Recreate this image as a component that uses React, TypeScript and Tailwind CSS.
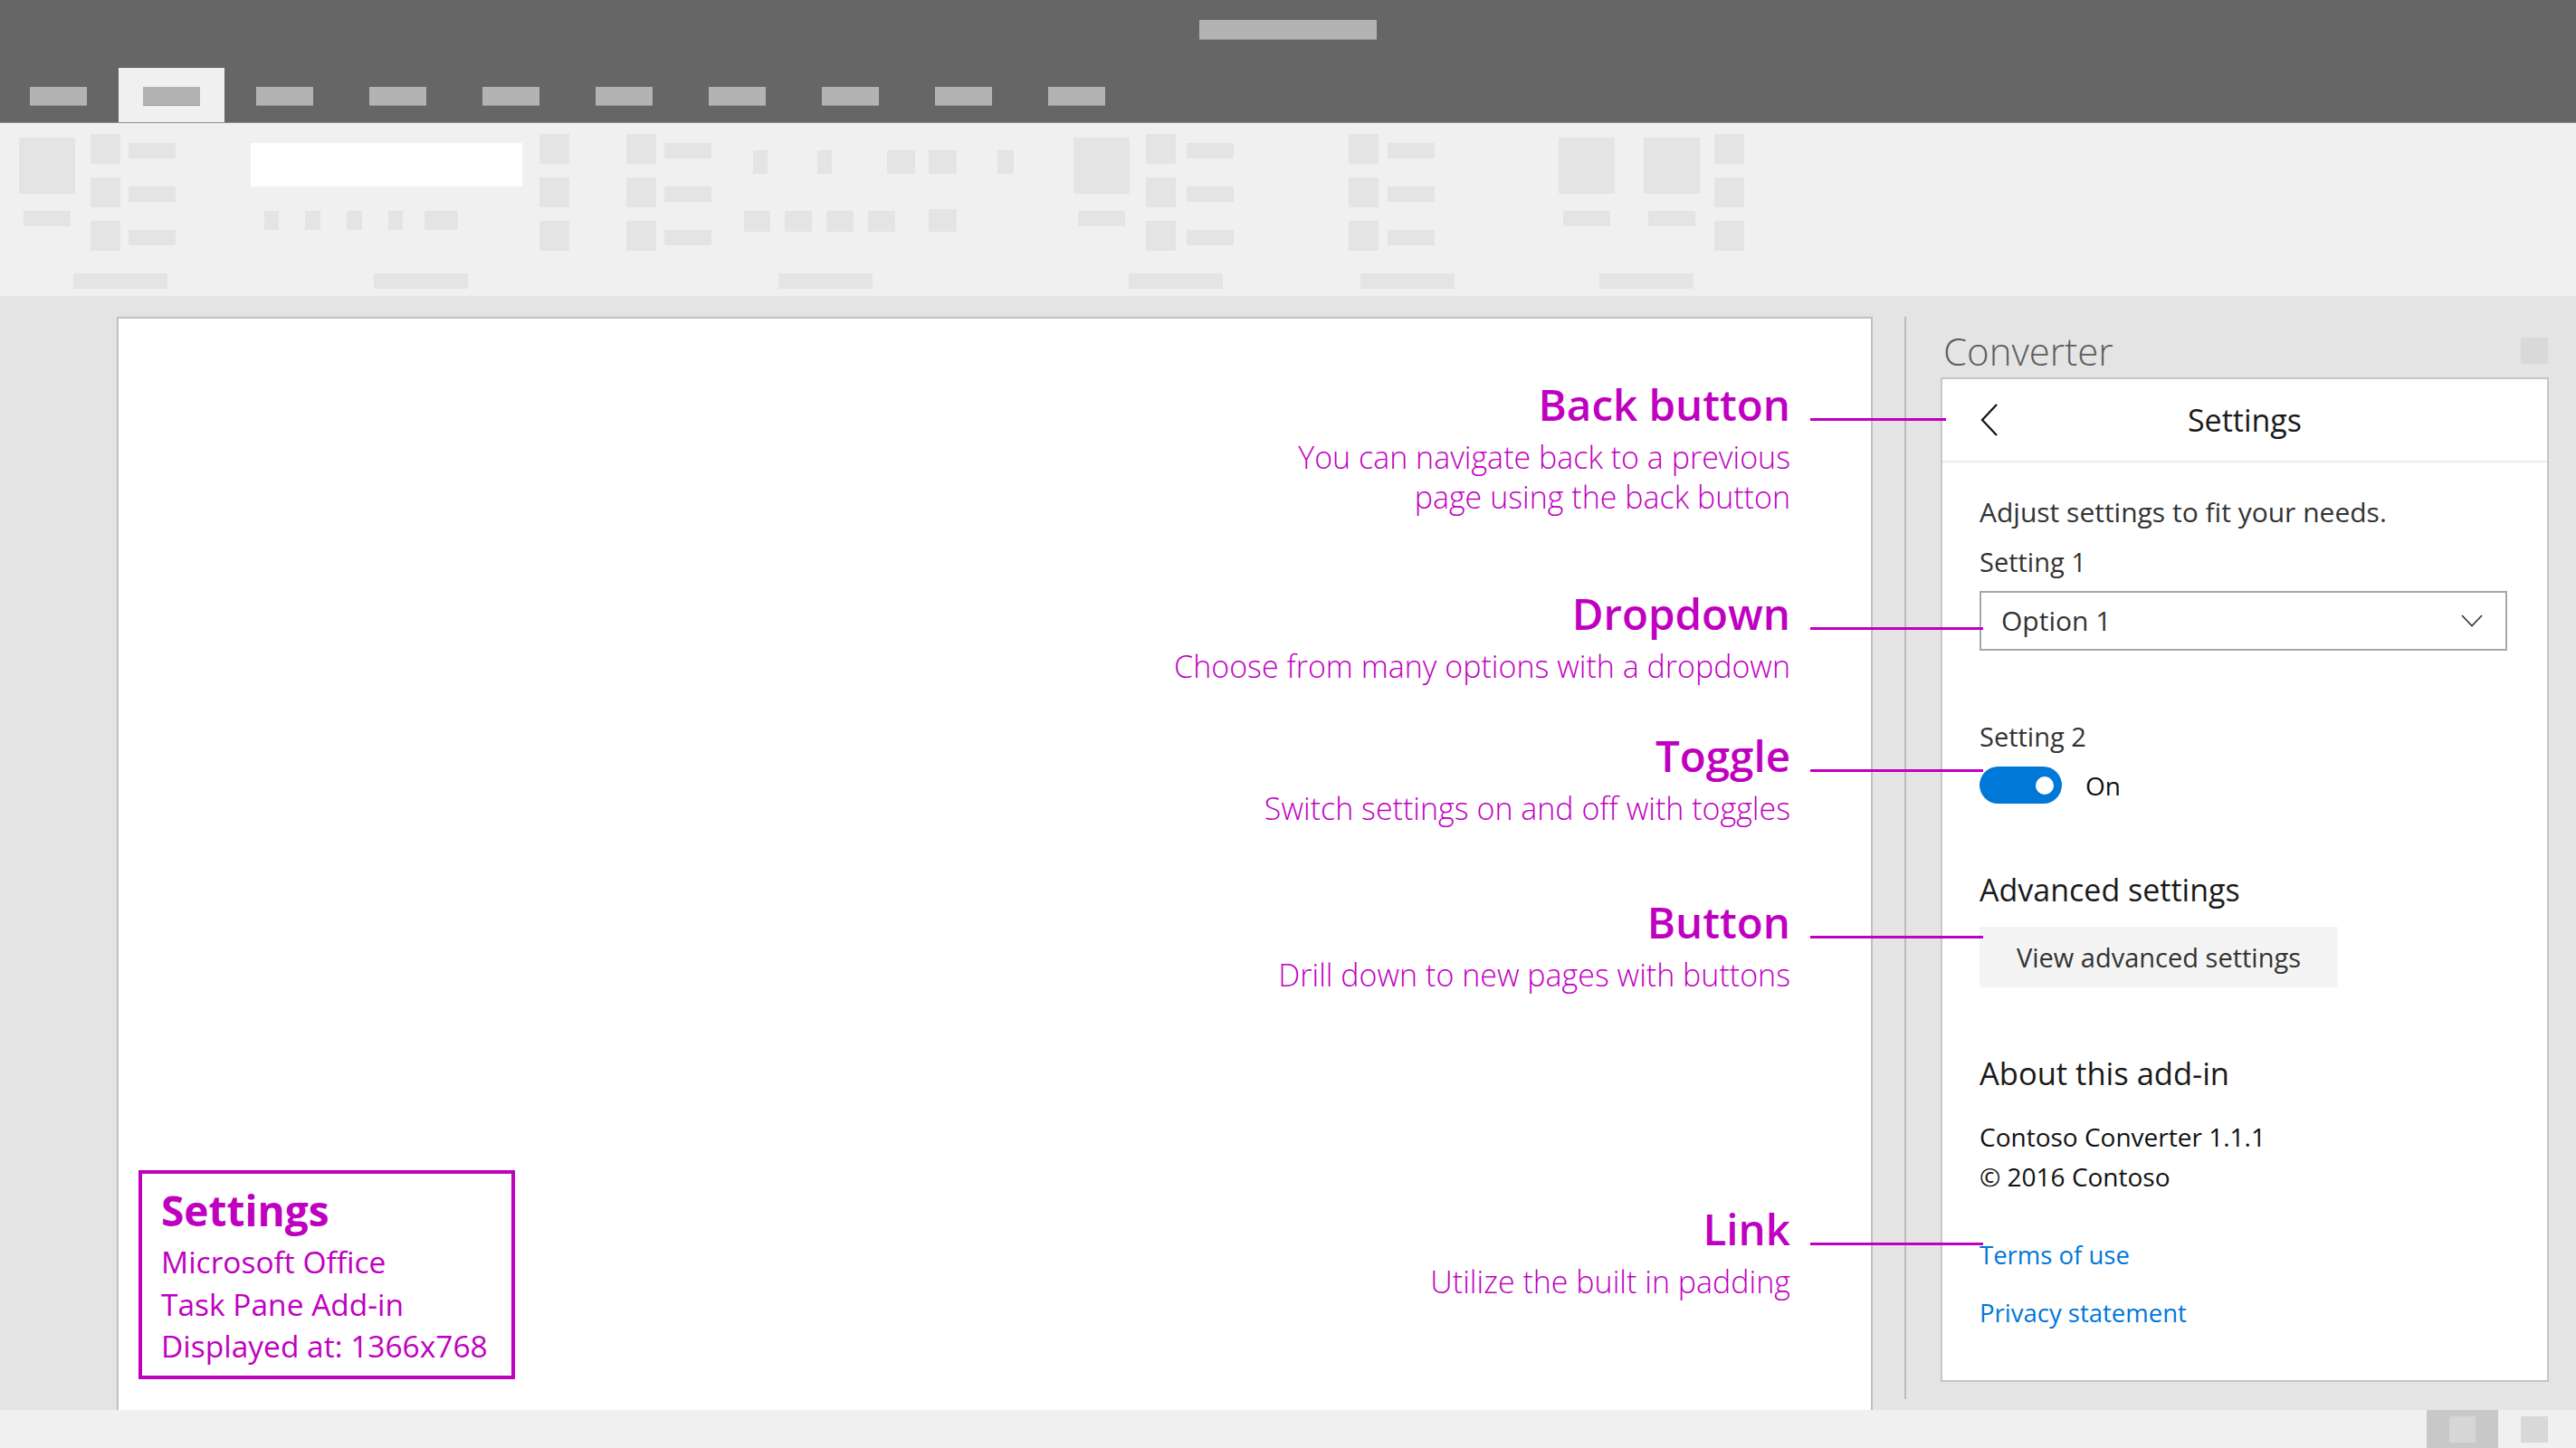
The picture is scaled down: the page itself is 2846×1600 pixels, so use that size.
const magenta = "#c000c0";

const Blk = ({ w, h, className = "" }: { w: string; h: string; className?: string }) => (
  <div className={`${w} ${h} bg-[#e4e4e4] shrink-0 ${className}`} />
);

// big ribbon button: square icon with a caption block below
const BigCol = ({ className = "" }: { className?: string }) => (
  <div className={`flex flex-col items-center w-[62px] mt-[4px] ${className}`}>
    <div className="w-[62px] h-[62px] bg-[#e4e4e4]" />
    <div className="w-[52px] h-[17px] bg-[#e4e4e4] mt-[19px]" />
  </div>
);

// three small buttons stacked, each with an optional label block
const StackCol = ({ gap = "ml-[9px]", rects = true, className = "" }: { gap?: string; rects?: boolean; className?: string }) => (
  <div className={`flex flex-col gap-[15px] ${className}`}>
    {[0, 1, 2].map((i) => (
      <div key={i} className="flex items-start">
        <div className="w-[33px] h-[33px] bg-[#e4e4e4]" />
        {rects && <div className={`w-[52px] h-[17px] bg-[#e4e4e4] mt-[10px] ${gap}`} />}
      </div>
    ))}
  </div>
);

const GroupLabel = ({ ml }: { ml: string }) => (
  <div className={`mt-auto w-[104px] h-[17px] bg-[#e4e4e4] ${ml}`} />
);

function Ribbon() {
  return (
    <div className="h-[191px] bg-[#f0f0f0] flex pt-[12px] pb-[8px]">
      {/* group A */}
      <div className="flex flex-col ml-[21px]">
        <div className="flex items-start">
          <BigCol />
          <StackCol className="ml-[17px]" />
        </div>
        <GroupLabel ml="ml-[60px]" />
      </div>

      {/* group B */}
      <div className="flex flex-col ml-[83px]">
        <div className="flex items-start">
          <div className="flex flex-col">
            <div className="w-[300px] h-[48px] bg-white mt-[10px]" />
            <div className="flex mt-[27px]">
              <Blk w="w-[16px]" h="h-[21px]" className="ml-[15px]" />
              <Blk w="w-[17px]" h="h-[21px]" className="ml-[29px]" />
              <Blk w="w-[17px]" h="h-[21px]" className="ml-[29px]" />
              <Blk w="w-[16px]" h="h-[21px]" className="ml-[29px]" />
              <Blk w="w-[37px]" h="h-[21px]" className="ml-[24px]" />
            </div>
          </div>
          <StackCol rects={false} className="ml-[19px]" />
        </div>
        <GroupLabel ml="ml-[136px]" />
      </div>

      {/* group C */}
      <div className="flex flex-col ml-[63px]">
        <div className="flex items-start">
          <StackCol />
          <div className="flex flex-col ml-[36px]">
            <div className="flex mt-[18px]">
              <Blk w="w-[16px]" h="h-[26px]" className="ml-[10px]" />
              <Blk w="w-[16px]" h="h-[26px]" className="ml-[55px]" />
              <Blk w="w-[31px]" h="h-[26px]" className="ml-[61px]" />
              <Blk w="w-[31px]" h="h-[26px]" className="ml-[15px]" />
              <Blk w="w-[18px]" h="h-[26px]" className="ml-[45px]" />
            </div>
            <div className="flex items-end mt-[39px]">
              <Blk w="w-[29px]" h="h-[23px]" />
              <Blk w="w-[30px]" h="h-[23px]" className="ml-[16px]" />
              <Blk w="w-[30px]" h="h-[23px]" className="ml-[16px]" />
              <Blk w="w-[30px]" h="h-[23px]" className="ml-[16px]" />
              <Blk w="w-[31px]" h="h-[25px]" className="ml-[37px]" />
            </div>
          </div>
        </div>
        <GroupLabel ml="ml-[168px]" />
      </div>

      {/* group D */}
      <div className="flex flex-col ml-[66px]">
        <div className="flex items-start">
          <BigCol />
          <StackCol gap="ml-[12px]" className="ml-[18px]" />
        </div>
        <GroupLabel ml="ml-[61px]" />
      </div>

      {/* group E */}
      <div className="flex flex-col ml-[127px]">
        <div className="flex items-start">
          <StackCol gap="ml-[10px]" />
        </div>
        <GroupLabel ml="ml-[13px]" />
      </div>

      {/* group F */}
      <div className="flex flex-col ml-[115px]">
        <div className="flex items-start">
          <BigCol />
          <BigCol className="ml-[32px]" />
          <StackCol rects={false} className="ml-[16px]" />
        </div>
        <GroupLabel ml="ml-[45px]" />
      </div>
    </div>
  );
}

function TitleBar() {
  return (
    <div className="h-[136px] bg-[#666666] border-b border-[#8f8f8f] flex flex-col">
      <div className="ml-[1325px] mt-[22px] w-[196px] h-[22px] bg-[#b3b3b3] border-b border-[#9c9c9c]" />
      <div className="mt-auto flex gap-[8px] pl-[6px]">
        {Array.from({ length: 10 }).map((_, i) => (
          <div
            key={i}
            className={`w-[117px] h-[60px] flex justify-center pt-[21px] ${i === 1 ? "bg-[#f0f0f0]" : ""}`}
          >
            <div className="w-[63px] h-[21px] bg-[#b3b3b3] border-b border-[#9c9c9c]" />
          </div>
        ))}
      </div>
    </div>
  );
}

type Callout = { title: string; lines: string[]; mt: string; lineW: string };

const callouts: Callout[] = [
  { title: "Back button", lines: ["You can navigate back to a previous", "page using the back button"], mt: "mt-[68px]", lineW: "w-[150px]" },
  { title: "Dropdown", lines: ["Choose from many options with a dropdown"], mt: "mt-[80px]", lineW: "w-[191px]" },
  { title: "Toggle", lines: ["Switch settings on and off with toggles"], mt: "mt-[50px]", lineW: "w-[191px]" },
  { title: "Button", lines: ["Drill down to new pages with buttons"], mt: "mt-[77px]", lineW: "w-[191px]" },
  { title: "Link", lines: ["Utilize the built in padding"], mt: "mt-[232px]", lineW: "w-[191px]" },
];

function DocPage() {
  return (
    <div className="w-[1940px] bg-white border-t-2 border-l-2 border-r-2 border-[#c0c0c0] flex justify-between">
      <div className="flex flex-col justify-end pl-[22px] pb-[34px]">
        <div className="w-[416px] h-[231px] border-4 border-[#c000c0] pl-[21px] pt-[12px] text-[#c000c0]">
          <div className="text-[46px] leading-[56px] font-bold">Settings</div>
          <div className="mt-[6px] text-[33.5px] leading-[46.5px]">
            <div>Microsoft Office</div>
            <div>Task Pane Add-in</div>
            <div>Displayed at: 1366x768</div>
          </div>
        </div>
      </div>

      <div className="flex flex-col items-end pr-[89px] text-[#c000c0]">
        {callouts.map((c) => (
          <div key={c.title} className={`flex flex-col items-end ${c.mt}`}>
            <div className="relative text-[47.5px] leading-[54px] font-semibold">
              {c.title}
              <div
                className={`absolute z-10 left-full ml-[22px] top-[42px] h-[3px] ${c.lineW}`}
                style={{ backgroundColor: magenta }}
              />
            </div>
            <div className="mt-[9px] text-[34px] leading-[44px] font-light text-right">
              {c.lines.map((l) => (
                <div key={l}>{l}</div>
              ))}
            </div>
          </div>
        ))}
      </div>
    </div>
  );
}

function TaskPane() {
  return (
    <div className="ml-[38px] w-[672px] flex flex-col pb-[31px]">
      <div className="h-[67px] flex items-start justify-between">
        <div className="mt-[14px] ml-[3px] text-[42px] leading-[48px] font-light text-[#5e5e5e]">Converter</div>
        <div className="mt-[23px] mr-[1px] w-[30px] h-[29px] bg-[#d9d9d9]" />
      </div>

      <div className="flex-1 bg-white border-2 border-[#c6c6c6] flex flex-col">
        <div className="relative h-[92px] border-b-2 border-[#ececec] flex items-center justify-center">
          <svg className="absolute left-[42px] top-[27px]" width="20" height="37" viewBox="0 0 20 37">
            <path d="M18 1 L2 18 L18 35" fill="none" stroke="#111" strokeWidth="2.2" />
          </svg>
          <span className="text-[34px] leading-[90px] text-[#1a1a1a]">Settings</span>
        </div>

        <div className="pl-[41px] pr-[44px] flex flex-col text-[#333]">
          <div className="mt-[35px] text-[30px] leading-[40px]">Adjust settings to fit your needs.</div>
          <div className="mt-[15px] text-[29px] leading-[40px]">Setting 1</div>
          <div className="mt-[12px] h-[66px] border-2 border-[#a6a6a6] flex items-center justify-between pl-[22px] pr-[25px]">
            <span className="text-[30px] leading-[40px]">Option 1</span>
            <svg width="24" height="14" viewBox="0 0 24 14">
              <path d="M1 1 L12 12.5 L23 1" fill="none" stroke="#333" strokeWidth="1.6" />
            </svg>
          </div>

          <div className="mt-[75px] text-[29px] leading-[40px]">Setting 2</div>
          <div className="mt-[13px] flex items-center">
            <div className="w-[91px] h-[41px] rounded-full bg-[#0078d7] flex items-center justify-end pr-[9px]">
              <div className="w-[20px] h-[20px] rounded-full bg-white" />
            </div>
            <span className="ml-[26px] text-[28px] leading-[40px] text-[#111]">On</span>
          </div>

          <div className="mt-[73px] text-[34px] leading-[44px] text-[#1a1a1a]">Advanced settings</div>
          <button className="mt-[19px] w-[396px] h-[67px] bg-[#f4f4f4] text-[29px] text-[#333] flex items-center justify-center">
            View advanced settings
          </button>

          <div className="mt-[73px] text-[34.5px] leading-[44px] text-[#1a1a1a]">About this add-in</div>
          <div className="mt-[26px] text-[28px] leading-[44px] text-[#111]">
            <div>Contoso Converter 1.1.1</div>
            <div>© 2016 Contoso</div>
          </div>

          <a className="mt-[43px] text-[27.5px] leading-[44px] text-[#0078d7]">Terms of use</a>
          <a className="mt-[20px] text-[27.5px] leading-[44px] text-[#0078d7]">Privacy statement</a>
        </div>
      </div>
    </div>
  );
}

export default function App() {
  return (
    <div className="w-[2846px] h-[1600px] flex flex-col bg-[#e4e4e4] overflow-hidden font-['Open_Sans',sans-serif]">
      <TitleBar />
      <Ribbon />

      <div className="flex-1 flex pl-[129px] pt-[23px]">
        <DocPage />
        <div className="ml-[35px] w-[2px] bg-[#bcbcbc] mb-[12px]" />
        <TaskPane />
      </div>

      <div className="h-[42px] bg-[#f0f0f0] flex items-stretch justify-end pr-[31px]">
        <div className="w-[79px] bg-[#c8c8c8] flex items-center justify-center">
          <div className="w-[29px] h-[29px] bg-[#d6d6d6]" />
        </div>
        <div className="ml-[25px] self-center w-[30px] h-[29px] bg-[#d8d8d8]" />
      </div>
    </div>
  );
}
